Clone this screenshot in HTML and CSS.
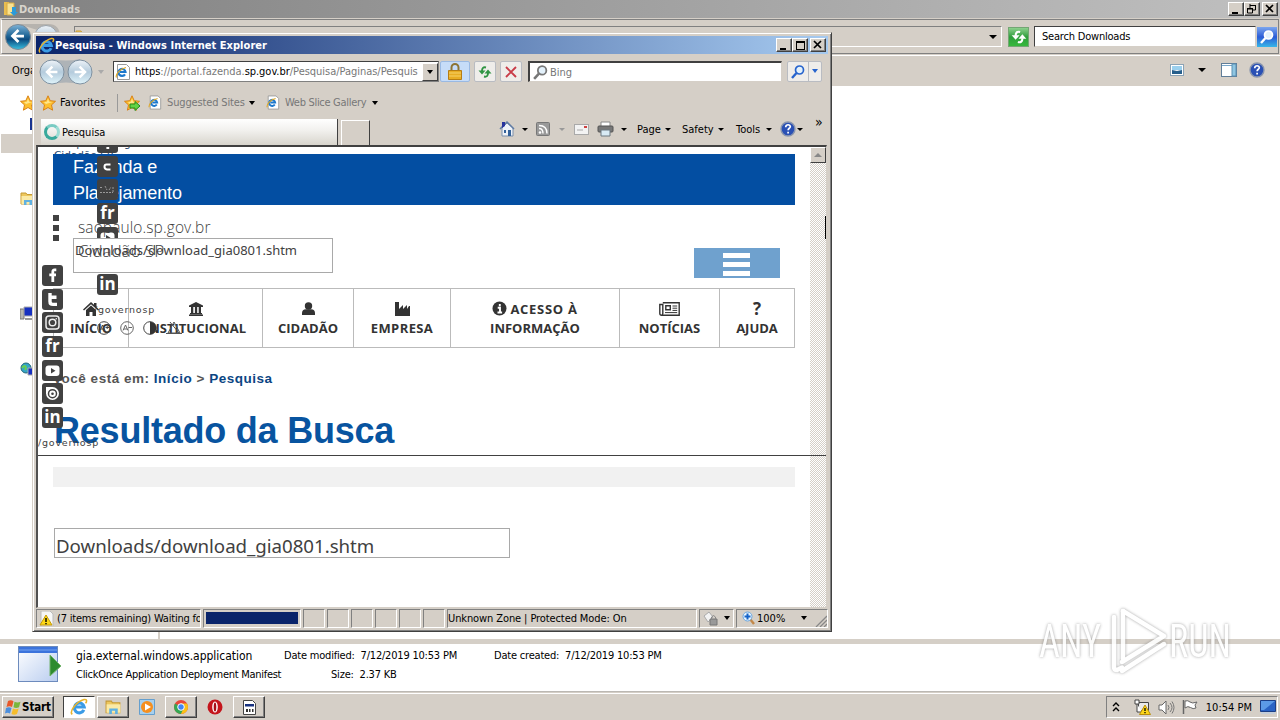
FILE: index.html
```html
<!DOCTYPE html>
<html lang="en">
<head>
    <meta charset="UTF-8">
    <meta name="viewport" content="width=device-width, initial-scale=1.0">
    <title>Pesquisa</title>
    <link rel="stylesheet" href="styles.css">
</head>
<body>
<!-- shared icons -->
<svg class="defs" width="0" height="0">
    <defs>
        <linearGradient id="gBlue" x1="0" y1="0" x2="0" y2="1"><stop offset="0" stop-color="#7fb4d8"/><stop offset=".45" stop-color="#1f6596"/><stop offset=".6" stop-color="#0d4c80"/><stop offset="1" stop-color="#39c0e0"/></linearGradient>
        <linearGradient id="gPale" x1="0" y1="0" x2="0" y2="1"><stop offset="0" stop-color="#eef3f8"/><stop offset=".5" stop-color="#b4cbdc"/><stop offset="1" stop-color="#e0f4fa"/></linearGradient>
        <linearGradient id="gWin" x1="0" y1="0" x2="1" y2="1"><stop offset="0" stop-color="#ffffff"/><stop offset="1" stop-color="#b9cdf0"/></linearGradient>
        <symbol id="ie" viewBox="0 0 16 16">
            <path d="M12.300 10.600A4.400 4.400 0 1 1 12.600 8H5" fill="none" stroke="#3a9be6" stroke-width="2.800"/>
            <path d="M2 14.600C-1 12 6 3 12.500 1.400c3-.6 2.400 1.900 1.300 3.300" fill="none" stroke="#e7b32c" stroke-width="1.400"/>
        </symbol>
        <symbol id="iepage" viewBox="0 0 16 16">
            <path d="M2.500.500h9l3 3v12h-12z" fill="#fff" stroke="#9a9a9a"/>
            <path d="M10 10.300A3.500 3.500 0 1 1 10.500 8H5" fill="none" stroke="#1d78cc" stroke-width="2.200"/>
            <path d="M1.500 13.500C0 11 5 4.500 11 3.500" fill="none" stroke="#e0a928" stroke-width="1.200"/>
        </symbol>
        <symbol id="star" viewBox="0 0 16 16"><path d="M8 .8l2.200 4.900 5.300.6-4 3.600 1.100 5.300L8 12.500l-4.600 2.700 1.100-5.300-4-3.600 5.300-.6z" fill="#fdc02f" stroke="#d98218"/><path d="M8 3.500l1.200 3.200 3.300.3-6.500 2-2-2 2.800-.3z" fill="#ffe58a"/></symbol>
        <symbol id="folder" viewBox="0 0 16 16"><path d="M1 2h5l1 1.500h7V13H1z" fill="#edc75d" stroke="#c69a35"/><path d="M1.500 5h13v8h-13z" fill="#fbeaa6"/><path d="M4 14V9h8v5h-2.500v-3h-3v3z" fill="#5fb1e2"/></symbol>
        <symbol id="left" viewBox="0 0 24 24"><path d="M12.500 5.500L6 12l6.500 6.500M6.500 12H18.500" fill="none" stroke="#fff" stroke-width="3"/></symbol>
        <symbol id="lens" viewBox="0 0 16 16"><circle cx="9.500" cy="6" r="4" fill="#e3f1fb" stroke="currentColor" stroke-width="1.700"/><path d="M6.500 9L2 14" stroke="currentColor" stroke-width="2.400"/></symbol>
        <symbol id="refresh" viewBox="0 0 16 16"><path d="M9 3.500Q5 2.500 5 7M7 12.500q4 1 4-3.500" stroke="currentColor" stroke-width="1.900" fill="none"/><path d="M1.500 6.500h7L5 10.500zM7.500 9.500h7L11 5.500z" fill="currentColor"/></symbol>
        <symbol id="help" viewBox="0 0 16 16"><circle cx="8" cy="8" r="7" fill="#2a50b4" stroke="#8a96ae" stroke-width="1.400"/><path d="M5.700 6.200c0-3.400 4.800-3 4.600-.4-.1 1.500-2.200 1.500-2.200 3.400M8.100 10.700v1.900" fill="none" stroke="#fff" stroke-width="1.700"/></symbol>
        <symbol id="fb" viewBox="0 0 21 21"><rect width="21" height="21" rx="3" fill="#414141"/><path d="M14.300 4.800h-1.800c-1.500 0-1.700.8-1.700 2.200v10M7.300 9.800h6.700" fill="none" stroke="#fff" stroke-width="2.800"/></symbol>
        <symbol id="tw" viewBox="0 0 21 21"><rect width="21" height="21" rx="3" fill="#414141"/><path d="M8 4v8.500c0 2 1 2.900 3 2.900h4M8 8.300h6.500" fill="none" stroke="#fff" stroke-width="3.400"/></symbol>
        <symbol id="tw2" viewBox="0 0 21 21"><rect width="21" height="21" rx="3" fill="#414141"/><path d="M13.500 8.500H9.500q-2 0-2 2.300t2.500 2.700h3.500" fill="none" stroke="#fff" stroke-width="2"/></symbol>
        <symbol id="ig" viewBox="0 0 21 21"><rect width="21" height="21" rx="3" fill="#414141"/><rect x="4" y="4" width="13" height="13" rx="3" fill="none" stroke="#eee" stroke-width="1.500"/><circle cx="10.500" cy="10.500" r="3.300" fill="none" stroke="#eee" stroke-width="1.500"/><circle cx="14.300" cy="6.800" r=".8" fill="#eee"/></symbol>
        <symbol id="ig2" viewBox="0 0 21 21"><rect width="21" height="21" rx="3" fill="#414141"/><path d="M3 8.500h3M8 7l2 4M12 11l2-3M16 8v5M3 13.500h13" fill="none" stroke="#999" stroke-width="1" stroke-dasharray="2 1"/></symbol>
        <symbol id="yt" viewBox="0 0 21 21"><rect width="21" height="21" rx="3" fill="#414141"/><rect x="3.500" y="5.500" width="14" height="10.500" rx="3" fill="#fff"/><path d="M9 8l4.500 2.700L9 13.500z" fill="#414141"/></symbol>
        <symbol id="is" viewBox="0 0 21 21"><rect width="21" height="21" rx="3" fill="#414141"/><path d="M4 4h6.500a6.500 6.500 0 1 1-6.500 6.500z" fill="#fff"/><circle cx="10.500" cy="10.700" r="4" fill="#fff" stroke="#414141" stroke-width="1.500"/><circle cx="10.500" cy="10.700" r="1.300" fill="#414141"/></symbol>
    </defs>
</svg>

<div class="desktop">
    <!-- explorer window -->
    <div class="explorer">
        <div class="ex-title">
            <svg width="16" height="16" viewBox="0 0 16 16"><path d="M2 1h5v13H2z" fill="#e9bd50"/><path d="M5 2h7v12H5z" fill="#fae391" stroke="#d6ab45"/><path d="M10 6h4v5h2l-4 4-4-4h2z" fill="#2c9ad8"/></svg>
            <span class="ex-name">Downloads</span>
            <div class="caption-btns">
                <span class="cbtn"><i class="min"></i></span><span class="cbtn"><svg width="10" height="10" viewBox="0 0 10 10"><path d="M3 1.500h6M3 0v4M8.500 1v5H6M.5 5h5v4h-5zM0 4.500h6" fill="none" stroke="#000"/></svg></span><span class="cbtn last"><svg width="10" height="10" viewBox="0 0 10 10"><path d="M1 1l7 7M8 1L1 8" stroke="#000" stroke-width="1.700"/></svg></span>
            </div>
        </div>
        <div class="ex-nav">
            <svg class="orbs" width="58" height="28" viewBox="0 0 58 28"><path d="M14 1h30q12 0 12 13" fill="#b6b3ae"/><circle cx="14" cy="14" r="12.500" fill="url(#gBlue)" stroke="#7d8994"/><circle cx="42" cy="14" r="11.500" fill="url(#gPale)" stroke="#9aa3ab"/><use href="#left" x="3" y="2" width="22" height="22"/></svg>
            <div class="ex-address">
                <svg width="16" height="16"><use href="#folder"/></svg>
                <i class="arrow"></i>
            </div>
            <span class="ex-refresh"><svg width="18" height="18"><use href="#refresh"/></svg></span>
            <div class="ex-search">Search Downloads</div>
            <span class="ex-go"><svg width="16" height="16"><use href="#lens"/></svg></span>
        </div>
        <div class="ex-tools">
            <span class="org">Orga</span>
            <svg width="14" height="12" viewBox="0 0 14 12"><rect x=".5" y=".5" width="13" height="11" fill="#fff" stroke="#8ca3b5"/><path d="M2 2h10v4H2z" fill="#9bd0ee"/><path d="M2 6l5 1 5-1v4H2z" fill="#265f8c"/></svg>
            <i class="arrow"></i>
            <svg class="pane" width="16" height="14" viewBox="0 0 16 14"><rect x=".5" y=".5" width="15" height="13" fill="#fff" stroke="#607d98"/><path d="M1 2.500h14" stroke="#79a7ca"/><path d="M11 1h4v12h-4z" fill="#8fc6e2" stroke="#5a90b2"/></svg>
            <svg width="16" height="16"><use href="#help"/></svg>
        </div>
        <div class="ex-body">
            <div class="tree">
                <svg class="t-fav" width="16" height="16"><use href="#star"/></svg>
                <i class="t-desk"></i>
                <div class="t-sel"></div>
                <svg class="t-lib" width="16" height="16"><use href="#folder"/></svg>
                <svg class="t-pc" width="16" height="16" viewBox="0 0 16 16"><path d="M0 4h4v10H0z" fill="#b7b7b0" stroke="#777"/><path d="M4 2h12v9H4z" fill="#1630c0" stroke="#aaa"/><path d="M5 13h8v2H5z" fill="#999"/></svg>
                <svg class="t-net" width="16" height="16" viewBox="0 0 16 16"><circle cx="6" cy="6" r="5" fill="#35a5c8" stroke="#267"/><path d="M2 6c3-4 5-1 3 2" stroke="#68cf55" stroke-width="2" fill="none"/><path d="M8 6h8v7H8z" fill="#1630c0" stroke="#aaa"/></svg>
            </div>
        </div>
        <div class="ex-details">
            <svg class="app-icon" width="44" height="38" viewBox="0 0 44 38"><rect x=".5" y=".5" width="39" height="35" fill="url(#gWin)" stroke="#6d8bbd"/><path d="M1 1h38v6H1z" fill="#3b73dc"/><path d="M1 4h38" stroke="#74a3f0"/><path d="M32 9l11 11-11 10z" fill="#2d8b2f" stroke="#73b36c"/></svg>
            <div class="d-main">
                <div class="d-name">gia.external.windows.application</div>
                <div class="d-type">ClickOnce Application Deployment Manifest</div>
            </div>
            <div class="d-col">
                <div class="d-row">Date modified: &nbsp;7/12/2019 10:53 PM</div>
                <div class="d-row size">Size: &nbsp;2.37 KB</div>
            </div>
            <div class="d-col created">
                <div class="d-row">Date created: &nbsp;7/12/2019 10:53 PM</div>
            </div>
        </div>
    </div>

    <!-- internet explorer window -->
    <div class="ie">
        <div class="ie-title">
            <svg width="17" height="17"><use href="#ie"/></svg>
            <span class="ie-name">Pesquisa - Windows Internet Explorer</span>
            <div class="caption-btns">
                <span class="cbtn"><i class="min"></i></span><span class="cbtn"><i class="max"></i></span><span class="cbtn last"><svg width="10" height="10" viewBox="0 0 10 10"><path d="M1 1l7 7M8 1L1 8" stroke="#000" stroke-width="1.700"/></svg></span>
            </div>
        </div>
        <div class="ie-nav">
            <svg class="ie-orbs" width="56" height="28" viewBox="0 0 56 28"><path d="M14 1q14 3 28 0v25q-14-3-28 0z" fill="#aeb3b7"/><circle cx="14" cy="14" r="12" fill="url(#gPale)" stroke="#7f91a1"/><circle cx="42" cy="14" r="12" fill="url(#gPale)" stroke="#7f91a1"/><use href="#left" x="4" y="4" width="20" height="20"/><use href="#left" x="-52" y="4" width="20" height="20" transform="scale(-1 1)"/></svg>
            <i class="arrow pale"></i>
            <div class="ie-address">
                <svg width="16" height="16"><use href="#iepage"/></svg>
                <span class="url"><b>https</b>://portal.fazenda.<b>sp.gov.br</b>/Pesquisa/Paginas/Pesquis</span>
                <span class="drop"><i class="arrow"></i></span>
            </div>
            <span class="tbtn lock"><svg width="14" height="17" viewBox="0 0 14 17"><path d="M3.500 8V4.500a3.500 3.500 0 0 1 7 0V8" fill="none" stroke="#8d7434" stroke-width="2"/><path d="M.5 7.500h13v9H.5z" fill="#e8ad24" stroke="#b67d14"/><path d="M1 10h12M1 13h12" stroke="#f6d268"/></svg></span>
            <span class="tbtn green"><svg width="16" height="16"><use href="#refresh"/></svg></span>
            <span class="tbtn stop"><svg width="12" height="12" viewBox="0 0 12 12"><path d="M1 1l10 10M11 1L1 11" stroke="#c93c48" stroke-width="1.900"/></svg></span>
            <div class="ie-search"><svg width="17" height="17"><use href="#lens"/></svg><span>Bing</span></div>
            <span class="tbtn go"><svg width="16" height="16"><use href="#lens"/></svg><span><i class="arrow"></i></span></span>
        </div>
        <div class="ie-favs">
            <svg width="16" height="16"><use href="#star"/></svg>
            <span class="fav-label">Favorites</span>
            <svg class="addfav" width="16" height="16" viewBox="0 0 16 16"><use href="#star"/><path d="M6 9h5V6.500l5 4.500-5 4.500V13H6z" fill="#63d344" stroke="#248c1d"/></svg>
            <svg class="page1" width="14" height="15"><use href="#iepage"/></svg>
            <span class="sugg">Suggested Sites</span><i class="arrow"></i>
            <svg class="page2" width="14" height="15"><use href="#iepage"/></svg>
            <span class="slice">Web Slice Gallery</span><i class="arrow"></i>
        </div>
        <div class="ie-tabs">
            <div class="tab"><i class="spinner"></i><span>Pesquisa</span></div>
            <div class="newtab"></div>
            <div class="commands">
                <svg width="16" height="16" viewBox="0 0 16 16"><path d="M3 7v8h11V7L8 2z" fill="#eef2f8" stroke="#7d90ab"/><path d="M1 8l7-7 7 7" fill="none" stroke="#5f7ba4" stroke-width="1.500"/><path d="M3 1h3v4L3 7z" fill="#27339d"/><path d="M9 9h3v6H9z" fill="#34629a"/><path d="M5 9h2v3H5z" fill="#34629a"/></svg><i class="arrow"></i>
                <svg class="rss" width="14" height="14" viewBox="0 0 14 14"><rect x=".5" y=".5" width="13" height="13" rx="1" fill="#999" stroke="#777"/><circle cx="4" cy="10.500" r="1.300" fill="#fff"/><path d="M3 6.500q4 0 4 5M3 3.500q8 0 8 8" fill="none" stroke="#fff" stroke-width="1.400"/></svg><i class="arrow dim"></i>
                <svg class="mail" width="15" height="11" viewBox="0 0 15 11"><rect x=".5" y=".5" width="14" height="10" fill="#f3f3f3" stroke="#a9a9a9"/><path d="M10 2h3v2h-3z" fill="#cd4141"/><path d="M3 6h6" stroke="#aaa"/></svg>
                <svg class="print" width="17" height="16" viewBox="0 0 17 16"><path d="M4 1h9v5H4z" fill="#fff" stroke="#888"/><rect x="1" y="5" width="15" height="6" rx="1" fill="#777" stroke="#555"/><path d="M4 9h9v6H4z" fill="#d8eaf4" stroke="#6c7880"/></svg><i class="arrow"></i>
                <span class="cmd page">Page</span><i class="arrow"></i>
                <span class="cmd safety">Safety</span><i class="arrow"></i>
                <span class="cmd toolsm">Tools</span><i class="arrow"></i>
                <svg class="q" width="16" height="16"><use href="#help"/></svg><i class="arrow near"></i>
                <span class="more">»</span>
            </div>
        </div>

        <div class="viewport">
            <div class="site">
                <span class="ghost line1">saopaulo.sp.gov.br</span>
                <span class="ghost">Cidadão SP</span>
                <div class="banner"><div>Fazenda e</div><div>Planejamento</div></div>
                <div class="masthead">
                    <div class="dots"><i></i><i></i><i></i></div>
                    <div class="left-col">
                        <div class="gov">saopaulo.sp.gov.br</div>
                        <div class="top-search">Downloads/download_gia0801.shtm</div>
                    </div>
                    <div class="burger"><i></i><i></i><i></i></div>
                </div>
                <nav class="menu">
                    <a class="m-inicio"><svg width="16" height="14" viewBox="0 0 16 14"><path d="M0 7.500L8 0l3 2.800V1h2.500v4L16 7.500l-1 1L8 2.300 1 8.500z" fill="#333"/><path d="M3 8l5-4.500L13 8v6H9.500v-4h-3v4H3z" fill="#333"/></svg>INÍCIO</a>
                    <a class="m-inst"><svg width="14" height="14" viewBox="0 0 14 14"><path d="M0 3.500L7 0l7 3.500V5H0zM2 5h2.300v6H2zm3.900 0h2.300v6H5.900zm3.800 0H12v6H9.700zM1 11h12v1.200H1zM0 12.500h14V14H0z" fill="#333"/></svg>INSTITUCIONAL</a>
                    <a class="m-cid"><svg width="13" height="14" viewBox="0 0 13 14"><circle cx="6.500" cy="4" r="3.700" fill="#333"/><path d="M0 13v-2q0-3.500 4-3.800h5q4 .3 4 3.800v2z" fill="#333"/></svg>CIDADÃO</a>
                    <a class="m-emp"><svg width="15" height="14" viewBox="0 0 15 14"><path d="M0 14V0h4v7l4-4v4l4-4v4l2-3 1 0v10z" fill="#333"/></svg>EMPRESA</a>
                    <a class="m-info"><span class="line"><svg width="15" height="15" viewBox="0 0 15 15"><circle cx="7.500" cy="7.500" r="7" fill="#333"/><path d="M7.800 3v2.200M5.700 6.700H8v4.600M5.500 11.500h4.600" fill="none" stroke="#fff" stroke-width="1.900"/></svg> ACESSO À</span>INFORMAÇÃO</a>
                    <a class="m-not"><svg width="21" height="14" viewBox="0 0 21 14"><path d="M3.800.8h16.400v12.400H2.500Q.8 13.200.8 11.500V2.500h3v9q0 1.500-1.300 1.700" fill="none" stroke="#333" stroke-width="1.400"/><path d="M6.800 3.800h4.500v4H6.800z" fill="none" stroke="#333" stroke-width="1.400"/><path d="M13.500 4h4.700M13.500 6.200h4.700M13.500 8.400h4.700M6 10.600h12.200" stroke="#333"/></svg>NOTÍCIAS</a>
                    <a class="m-aj"><span class="qm">?</span>AJUDA</a>
                </nav>
                <div class="breadcrumb">Você está em: <a>Início</a> &gt; <a>Pesquisa</a></div>
                <h1>Resultado da Busca</h1>
                <div class="graybar"></div>
                <div class="query">Downloads/download_gia0801.shtm</div>

                <!-- floating widgets that land over the page -->
                <div class="social header-social">
                    <svg><use href="#fb"/></svg><svg><use href="#tw2"/></svg><svg><use href="#ig2"/></svg><span class="sq">fr</span><svg><use href="#yt"/></svg>
                </div>
                <span class="sq header-in">in</span>
                <span class="cidadao">Cidadão SP</span>
                <span class="gsp header-gsp">/governosp</span>
                <div class="access">
                    <svg width="14" height="14" viewBox="0 0 14 14"><circle cx="7" cy="7" r="6.300" fill="none" stroke="#444"/><path d="M3 9.500L5.500 4 8 9.500M4 8h3M8.500 6.500H12M10.200 5v3" stroke="#444" fill="none"/></svg>
                    <svg width="14" height="14" viewBox="0 0 14 14"><circle cx="7" cy="7" r="6.300" fill="none" stroke="#666"/><path d="M3 9.500L5.500 4 8 9.500M4 8h3M8.500 6.500H12" stroke="#666" fill="none"/></svg>
                    <svg width="14" height="14" viewBox="0 0 14 14"><circle cx="7" cy="7" r="6.300" fill="#fff" stroke="#444"/><path d="M7 .7a6.300 6.300 0 0 1 0 12.600z" fill="#333"/></svg>
                    <svg width="16" height="14" viewBox="0 0 16 14"><path d="M2 12L8 1l6 11zM0 12.500h16M4 1l9 11" fill="none" stroke="#555"/></svg>
                </div>
                <div class="social side-social">
                    <svg><use href="#fb"/></svg><svg><use href="#tw"/></svg><svg><use href="#ig"/></svg><span class="sq">fr</span><svg><use href="#yt"/></svg><svg><use href="#is"/></svg><span class="sq">in</span>
                </div>
                <span class="gsp side-gsp">/governosp</span>
            </div>
            <div class="scroll"><span class="up"></span></div>
            <div class="rule"></div>
            <div class="mark"></div>
        </div>

        <div class="status">
            <div class="cell msg"><svg width="15" height="15" viewBox="0 0 15 15"><path d="M2 0h9l3 3v12H2z" fill="#f7f7f7" stroke="#bbb"/><path d="M7 4l6 10H1z" fill="#fcd716" stroke="#c79a0b"/><path d="M7 7v4M7 12v1.200" stroke="#000" stroke-width="1.400"/></svg><span>(7 items remaining) Waiting fo</span></div>
            <div class="cell prog"><i></i></div>
            <div class="cell s"></div><div class="cell s"></div><div class="cell s"></div><div class="cell s"></div><div class="cell s"></div><div class="cell s"></div>
            <div class="cell zone">Unknown Zone | Protected Mode: On</div>
            <div class="cell priv"><svg width="16" height="15" viewBox="0 0 16 15"><path d="M1 5l5-4 4 5-5 5z" fill="#f2f2f2" stroke="#aaa"/><path d="M7 8h7v6H7z" fill="#999" stroke="#777"/><path d="M8.500 8V6q2-3 4 0v2" fill="none" stroke="#888"/></svg><i class="arrow"></i></div>
            <div class="cell zoom"><svg width="14" height="14" viewBox="0 0 14 14"><path d="M8 8l4 5" stroke="#c38848" stroke-width="2.400"/><circle cx="5.500" cy="5.500" r="4.500" fill="#e7f5ff" stroke="#6aa6df"/><path d="M5.500 2.500v6M2.500 5.500h6" stroke="#1563c8" stroke-width="2"/></svg><span>100%</span><i class="arrow"></i><svg class="grip" width="12" height="12" viewBox="0 0 12 12"><path d="M1 12L12 1M5 12l7-7M9 12l3-3" stroke="#888" stroke-width="1.300"/></svg></div>
        </div>
    </div>

    <svg class="watermark" width="200" height="76" viewBox="0 0 200 76">
        <g fill="none" stroke="#fff" stroke-width="4.500" stroke-linejoin="round" stroke-linecap="round"><path d="M78 15v50q0 3 3 3l5-2.500"/><path d="M87 9v48"/><path d="M87 9l41 25-42 26"/><path d="M86 69l42-27"/></g>
        <g class="wm"><text x="3" y="55" textLength="62" lengthAdjust="spacingAndGlyphs">ANY</text><text x="133" y="55" textLength="62" lengthAdjust="spacingAndGlyphs">RUN</text></g>
    </svg>

    <!-- taskbar -->
    <div class="taskbar">
        <div class="start"><svg width="17" height="16" viewBox="0 0 17 16"><path d="M3 2q3-1.500 5.500.3L7 8Q4.500 6.500 1.500 8z" fill="#e8582a"/><path d="M9.500 2.700q3 1.500 6 0L14 8.300q-3 1.500-5.500 0z" fill="#7ab63c"/><path d="M1 9q3-1.500 5.500 0L5 14.500q-2.500-1.500-5 0z" fill="#4c8fdd"/><path d="M8 9.500q3 1.500 5.700 0L12 15q-3 1.500-5.500 0z" fill="#f6bd2b"/></svg>Start</div>
        <div class="task on"><svg width="18" height="18"><use href="#ie"/></svg></div>
        <div class="task raised"><svg width="17" height="17"><use href="#folder"/></svg></div>
        <div class="task flat wmp"><svg width="16" height="16" viewBox="0 0 16 16"><path d="M.5.5h15v15H.5z" fill="#a7d0ee" stroke="#659fce"/><circle cx="8" cy="8" r="6" fill="#f58f1f"/><path d="M6 4.500l6 3.500-6 3.500z" fill="#fff"/></svg></div>
        <div class="task raised chrome"><svg width="16" height="16" viewBox="0 0 16 16"><circle cx="8" cy="8" r="7" fill="#e8473a"/><path d="M8 8L2 4.500A7 7 0 0 0 8 15l3-5z" fill="#35a853"/><path d="M8 8h3l-3 7a7 7 0 0 0 6-10.500H8z" fill="#fbc116"/><circle cx="8" cy="8" r="3.300" fill="#4285f4" stroke="#fff"/></svg></div>
        <div class="task flat opera"><svg width="16" height="16" viewBox="0 0 16 16"><circle cx="8" cy="8" r="7.500" fill="#c4151c"/><ellipse cx="8" cy="8" rx="2.800" ry="5.600" fill="#fff"/><ellipse cx="8" cy="8" rx="1.300" ry="4.500" fill="#a80e16"/></svg></div>
        <div class="task raised cal"><svg width="13" height="15" viewBox="0 0 13 15"><path d="M.5.5h9l3 3v11H.5z" fill="#fff" stroke="#444"/><path d="M2 4h9v2.500H2z" fill="#17317f"/><path d="M3 9h2v3H3zM6 9h1.500v3H6zM9 9h1.500v3H9z" fill="#333"/></svg></div>
        <div class="tray">
            <svg width="8" height="12" viewBox="0 0 8 12"><path d="M1 5l3-3 3 3M1 10l3-3 3 3" fill="none" stroke="#000" stroke-width="1.400"/></svg>
            <svg class="net" width="17" height="16" viewBox="0 0 17 16"><path d="M4.500 3.500h10v8h-10z" fill="#e9e9e9" stroke="#444"/><path d="M1 1h4v4H1zM3 5v8h5" fill="#fff" stroke="#444"/><path d="M11 6l5.500 9.500h-11z" fill="#fdd719" stroke="#b98e0a"/><path d="M11 9v3M11 13v1.200" stroke="#000" stroke-width="1.300"/></svg>
            <svg class="vol" width="17" height="15" viewBox="0 0 17 15"><path d="M1 5h3l4-4v13l-4-4H1z" fill="#fff" stroke="#666"/><path d="M10 5q2 2.500 0 5M12 3q4 4.500 0 9M14 1.500q4 6 0 12" fill="none" stroke="#777"/></svg>
            <svg class="flag" width="17" height="16" viewBox="0 0 17 16"><path d="M1.500 1v14" stroke="#666" stroke-width="1.500"/><path d="M3 2q3-1 5 1t7 0l-2 3 1 3q-3 1.500-5.500-.5T3 9z" fill="#fff" stroke="#666"/></svg>
            <span class="clock">10:54 PM</span>
            <svg class="show" width="16" height="14" viewBox="0 0 16 14"><path d="M.5.5h15v11H.5z" fill="#2a63c4" stroke="#1b3e86"/><path d="M1 1h14L4 10H1z" fill="#5c9ae6"/><path d="M1 13h14" stroke="#b5cdec"/></svg>
        </div>
    </div>
</div>
</body>
</html>
```

FILE: styles.css
```css
* {
    box-sizing: border-box;
}
body {
    margin: 0;
    font-family: "DejaVu Sans Condensed", "DejaVu Sans", sans-serif;
    font-stretch: condensed;
    font-size: 11px;
    color: #000;
    overflow: hidden;
}
svg {
    flex: none;
    display: block;
}
.defs {
    position: absolute;
}
.desktop {
    position: relative;
    width: 1280px;
    height: 720px;
    background-color: #d5cfc7;
    overflow: hidden;
    white-space: nowrap;
}
.arrow {
    flex: none;
    width: 0;
    height: 0;
    border: 3.5px solid transparent;
    border-top: 4px solid #000;
    border-bottom: 0;
}
.arrow.pale {
    border-top-color: #aaa;
    margin: 0 8px 0 4px;
}
.arrow.dim {
    border-top-color: #999;
}

/* explorer */
.explorer {
    display: flex;
    flex-direction: column;
    height: 693px;
}
.ex-title {
    height: 18px;
    display: flex;
    align-items: center;
    padding: 0 2px;
    gap: 1px;
    background: linear-gradient(90deg, #818181, #c0c0c0);
}
.ex-name {
    color: #d8d4cc;
    font-weight: bold;
    letter-spacing: 0;
}
.caption-btns {
    display: flex;
    margin-left: auto;
}
.cbtn {
    width: 16px;
    height: 14px;
    display: flex;
    align-items: center;
    justify-content: center;
    background-color: #d5cfc7;
    border: 1px solid;
    border-color: #fff #404040 #404040 #fff;
    box-shadow: inset -1px -1px 0 #808080;
}
.cbtn.last {
    margin-left: 2px;
}
.min {
    width: 6px;
    height: 2px;
    background-color: #000;
    margin: 7px 2px 0 0;
}
.max {
    width: 9px;
    height: 9px;
    border: 1px solid #000;
    border-top-width: 2px;
}
.ex-nav {
    height: 35px;
    margin: 1px 1px 1px 1px;
    border: 1px solid #808080;
    border-color: #808080 #808080 #808080 #fff;
    display: flex;
    align-items: center;
    padding-left: 2px;
}
.ex-address {
    width: 928px;
    height: 21px;
    margin-left: 12px;
    border: 1px solid #808080;
    border-bottom-color: #fff;
    border-right-color: #fff;
    display: flex;
    align-items: center;
}
.ex-address .arrow {
    margin-left: auto;
    margin-right: 4px;
    border-width: 4px 4px 0;
}
.ex-refresh {
    width: 21px;
    height: 20px;
    margin-left: 6px;
    display: flex;
    align-items: center;
    justify-content: center;
    color: #fff;
    background: linear-gradient(#8dd08d, #2f9e3c 50%, #36b83c);
    border: 1px solid #74a674;
}
.ex-search {
    width: 222px;
    height: 21px;
    margin-left: 5px;
    padding-left: 7px;
    line-height: 19px;
    letter-spacing: -0.2px;
    background-color: #fff;
    border: 1px solid #d5cfc7;
    border-top: 1px solid #404040;
    border-left: 1px solid #404040;
}
.ex-go {
    width: 20px;
    height: 20px;
    margin-left: 1px;
    display: flex;
    align-items: center;
    justify-content: center;
    color: #fff;
    background: linear-gradient(#7ba6ee, #2b5cd6 50%, #37b6e8);
}
.ex-tools {
    height: 31px;
    border-top: 1px solid #fff;
    display: flex;
    align-items: center;
    padding: 0 15px 2px 12px;
}
.org {
    margin-right: auto;
}
.ex-tools .arrow {
    margin-left: 14px;
    border-width: 4px 4px 0;
}
.ex-tools .pane {
    margin: 0 12px 0 15px;
}
.ex-body {
    height: 553px;
    background-color: #fff;
}
.tree {
    width: 160px;
    height: 553px;
    border-right: 2px solid #d5cfc7;
    display: flex;
    flex-direction: column;
    padding-top: 9px;
}
.tree svg {
    margin-left: 20px;
}
.t-desk {
    width: 4px;
    height: 12px;
    margin: 7px 0 0 30px;
    background-color: #1a3490;
}
.t-sel {
    height: 19px;
    margin: 4px 0 38px 1px;
    background-color: #d5cfc7;
}
.t-pc {
    margin-top: 98px;
}
.t-net {
    margin-top: 41px;
}
.ex-details {
    height: 53px;
    border-top: 5px solid #d5cfc7;
    border-bottom: 1px solid #bbb8b3;
    background-color: #fff;
    display: flex;
    padding-left: 18px;
}
.app-icon {
    margin-top: 2px;
}
.d-main {
    margin: 3px 0 0 14px;
    width: 208px;
}
.d-name {
    font-size: 12px;
    height: 19px;
    line-height: 18px;
    letter-spacing: -0.03px;
}
.d-type, .d-row {
    height: 18px;
    line-height: 18px;
    letter-spacing: -0.2px;
}
.d-type {
    letter-spacing: -0.28px;
}
.d-col {
    margin-top: 3px;
    width: 210px;
}
.d-row.size {
    padding-left: 47px;
    line-height: 20px;
}

/* internet explorer window */
.ie {
    position: absolute;
    left: 32px;
    top: 32px;
    width: 800px;
    height: 600px;
    background-color: #d5cfc7;
    border: 1px solid;
    border-color: #d5cfc7 #404040 #404040 #d5cfc7;
    box-shadow: inset 1px 1px 0 #fff, inset -1px -1px 0 #808080;
    padding: 3px;
    display: flex;
    flex-direction: column;
}
.ie-title {
    height: 18px;
    display: flex;
    align-items: center;
    padding: 0 2px;
    background: linear-gradient(90deg, #0a246a, #a6caf0);
}
.ie-name {
    color: #fff;
    font-weight: bold;
    letter-spacing: 0.04px;
}
.ie-nav {
    height: 35px;
    display: flex;
    align-items: center;
    padding-left: 2px;
}
.ie-address {
    width: 326px;
    height: 21px;
    margin-left: 1px;
    display: flex;
    align-items: center;
    background-color: #fff;
    border: 1px solid #808080;
    border-top: 1px solid #404040;
    border-left: 1px solid #404040;
    padding-left: 1px;
}
.url {
    flex: 1;
    margin-left: 4px;
    overflow: hidden;
    color: #777;
    letter-spacing: -0.03px;
}
.url b {
    font-weight: normal;
    color: #000;
}
.drop {
    width: 16px;
    height: 18px;
    display: flex;
    align-items: center;
    justify-content: center;
    background-color: #d5cfc7;
    border: 1px solid;
    border-color: #fff #404040 #404040 #fff;
}
.tbtn {
    width: 22px;
    height: 21px;
    margin-left: 4px;
    display: flex;
    align-items: center;
    justify-content: center;
    background-color: #efedea;
    border: 1px solid #b9bcc2;
    border-radius: 2px;
}
.tbtn.lock {
    width: 30px;
    margin-left: 1px;
    background-color: #c6dcf8;
    border-color: #9ab9e2;
}
.tbtn.green {
    color: #2f9442;
}
.ie-search {
    width: 254px;
    height: 21px;
    margin-left: 6px;
    padding-left: 2px;
    display: flex;
    align-items: center;
    background-color: #fff;
    border: 1px solid #d5cfc7;
    border-top: 2px solid #404040;
    border-left: 2px solid #404040;
    color: #777;
}
.ie-search span {
    margin-left: 1px;
}
.tbtn.go {
    width: 35px;
    margin-left: 5px;
    justify-content: space-between;
    padding: 0 3px 0 2px;
    color: #2764cd;
}
.go span {
    height: 19px;
    border-left: 1px solid #b9bcc2;
    padding: 7px 0 0 3px;
}
.go .arrow {
    display: block;
    border-top-color: #2764cd;
}
.ie-favs {
    height: 27px;
    display: flex;
    align-items: center;
    padding-left: 4px;
}
.fav-label {
    width: 58px;
    margin-left: 4px;
    border-right: 1px solid #999;
    line-height: 18px;
    letter-spacing: 0.1px;
}
.addfav {
    margin-left: 6px;
}
.page1 {
    margin-left: 8px;
}
.page2 {
    margin-left: 11px;
}
.sugg, .slice {
    color: #777;
    margin-left: 5px;
    letter-spacing: -0.15px;
}
.sugg {
    width: 82px;
}
.slice {
    width: 87px;
    letter-spacing: -0.3px;
}
.ie-tabs {
    height: 29px;
    display: flex;
    padding: 3px 0 0 5px;
}
.tab {
    width: 297px;
    display: flex;
    align-items: center;
    padding-left: 3px;
    background: linear-gradient(#fff, #f1f0ed 45%, #d8d5cd);
    border-right: 1px solid #404040;
}
.tab span {
    margin-left: 2px;
}
.spinner {
    width: 16px;
    height: 16px;
    border-radius: 50%;
    border: 3px solid #38a99c;
    border-right-color: #9bdcd4;
    border-top-color: #79cbc3;
}
.newtab {
    width: 29px;
    margin: 1px 0 0 3px;
    border: 1px solid #fff;
    border-right: 1px solid #404040;
    border-bottom: 0;
}
.commands {
    flex: 1;
    display: flex;
    align-items: center;
    height: 20px;
    padding-left: 129px;
}
.commands .arrow {
    border-width: 3px 3px 0;
    margin-left: 7px;
}
.commands .rss {
    margin-left: 8px;
}
.commands .arrow.dim {
    margin-left: 9px;
}
.commands .mail {
    margin-left: 9px;
}
.commands .print {
    margin-left: 8px;
}
.commands .cmd + .arrow {
    margin-left: 0;
}
.cmd {
    margin-left: 11px;
}
.cmd.page {
    width: 28px;
    margin-left: 10px;
}
.cmd.safety {
    width: 36px;
}
.cmd.toolsm {
    width: 30px;
    margin-left: 12px;
}
.commands .q {
    margin-left: 8px;
}
.commands .arrow.near {
    margin-left: 1px;
}
.more {
    font-size: 14px;
    margin: -14px 0 0 12px;
}

/* page area */
.viewport {
    position: relative;
    height: 463px;
    margin-right: 1px;
    border: 2px solid #404040;
    border-left-color: #505050;
    border-right: 1px solid #d5cfc7;
    border-bottom: 1px solid #d5cfc7;
    border-top-width: 2px;
    display: flex;
    background-color: #fff;
    overflow: hidden;
}
.site {
    position: relative;
    width: 772px;
    overflow: hidden;
    padding: 7px 15px 0 15px;
    color: #414141;
    font-stretch: normal;
}
.banner {
    position: relative;
    height: 51px;
    padding-left: 20px;
    background-color: #034ea2;
    color: #fff;
    font-family: "Liberation Sans", Arial, sans-serif;
    font-size: 18px;
    line-height: 26px;
    letter-spacing: -0.1px;
}
.masthead {
    display: flex;
    height: 83px;
}
.dots {
    width: 20px;
    padding-top: 10px;
}
.dots i {
    display: block;
    width: 6px;
    height: 6px;
    margin-bottom: 4px;
    background-color: #414141;
}
.left-col {
    width: 260px;
    padding-top: 12px;
    position: relative;
    z-index: 2;
}
.gov, .cidadao {
    font-family: "Open Sans", "Noto Sans", sans-serif;
    font-size: 15.5px;
    font-weight: 300;
    line-height: 21px;
}
.gov {
    padding-left: 5px;
    letter-spacing: 0.1px;
}
.top-search {
    height: 35px;
    padding: 1px 1px;
    border: 1px solid #a9a9a9;
    background-color: #fff;
    font-family: "Noto Sans", sans-serif;
    font-size: 13px;
    line-height: 20px;
}
.burger {
    width: 86px;
    height: 30px;
    margin: 43px 15px 0 auto;
    padding: 5px 30px 0 29px;
    background-color: #6fa1ce;
}
.burger i {
    display: block;
    height: 5px;
    margin-bottom: 4px;
    background-color: #fff;
}
.menu {
    display: flex;
    height: 60px;
    border: 1px solid #bbb;
    font-family: "Open Sans", "Noto Sans", sans-serif;
    font-size: 13px;
    font-weight: bold;
    color: #333;
}
.menu a {
    border-right: 1px solid #bbb;
    display: flex;
    flex-direction: column;
    align-items: center;
    padding-top: 13px;
    line-height: 22px;
}
.menu a svg {
    margin-bottom: 1px;
}
.menu a:last-child {
    border-right: 0;
}
.menu .line {
    display: flex;
    gap: 3px;
    height: 15px;
    line-height: 15px;
}
.menu .line svg {
    margin: -1px 0 0;
}
.m-inicio {
    width: 75px;
}
.m-inst {
    width: 134px;
}
.m-cid {
    width: 91px;
}
.m-emp {
    width: 97px;
    letter-spacing: 0.4px;
}
.m-info {
    width: 169px;
}
.menu .line {
    letter-spacing: 0.7px;
}
.m-not {
    width: 100px;
}
.m-aj {
    flex: 1;
}
.qm {
    height: 15px;
    line-height: 14px;
    font-size: 17px;
}
.breadcrumb {
    margin-top: 20px;
    line-height: 21px;
    height: 20px;
    font-family: "Liberation Sans", Arial, sans-serif;
    font-size: 13.5px;
    font-weight: bold;
    letter-spacing: 0.52px;
    color: #555;
}
.breadcrumb a {
    color: #0b4583;
}
h1 {
    margin: 23px 0 0;
    padding-left: 1px;
    height: 56px;
    line-height: 40px;
    font-family: "Liberation Sans", Arial, sans-serif;
    font-size: 36px;
    letter-spacing: -0.22px;
    color: #0854a0;
}
.graybar {
    height: 20px;
    background-color: #f1f1f1;
}
.query {
    width: 456px;
    height: 30px;
    margin: 41px 0 0 1px;
    padding-left: 1px;
    border: 1px solid #a9a9a9;
    font-family: "Noto Sans", sans-serif;
    font-size: 18.7px;
    letter-spacing: -0.03px;
    line-height: 34px;
    overflow: hidden;
}
.ghost {
    position: absolute;
    left: 16px;
    top: 2px;
    font-family: "DejaVu Sans", sans-serif;
    font-size: 10.5px;
    color: #24466d;
}
.ghost.line1 {
    top: -10px;
    left: 20px;
}

/* floating widgets */
.social {
    position: absolute;
    display: flex;
    flex-direction: column;
    gap: 2.7px;
}
.social svg, .sq {
    width: 21px;
    height: 21px;
}
.sq {
    background-color: #414141;
    border-radius: 3px;
    color: #fff;
    font-family: "Open Sans", sans-serif;
    font-weight: bold;
    font-size: 17px;
    line-height: 19px;
    text-align: center;
}
.header-social {
    left: 59px;
    top: -15px;
}
.side-social {
    left: 4px;
    top: 118px;
}
.header-in {
    position: absolute;
    left: 59px;
    top: 127px;
}
.cidadao {
    position: absolute;
    z-index: 3;
    left: 40px;
    top: 93px;
    font-size: 17px;
}
.gsp {
    position: absolute;
    font-family: "DejaVu Sans", sans-serif;
    font-size: 9.5px;
    letter-spacing: 0.8px;
}
.header-gsp {
    left: 56px;
    top: 157px;
}
.side-gsp {
    left: 0;
    top: 290px;
}
.access {
    position: absolute;
    left: 59px;
    top: 174px;
    display: flex;
    gap: 9px;
}
.scroll {
    flex: 1;
    background: repeating-conic-gradient(#fff 0 25%, #d5cfc7 0 50%) 0 0 / 2px 2px;
}
.up {
    width: 16px;
    height: 16px;
    display: flex;
    align-items: center;
    justify-content: center;
    background-color: #d5cfc7;
    border: 1px solid;
    border-color: #fff #404040 #404040 #fff;
}
.up::after {
    content: "";
    border: 4px solid transparent;
    border-top: 0;
    border-bottom: 4px solid #888;
}
.rule {
    position: absolute;
    left: 0;
    right: 0;
    top: 308px;
    height: 1px;
    background-color: #414141;
}
.mark {
    position: absolute;
    right: 0;
    top: 69px;
    width: 1px;
    height: 23px;
    background-color: #000;
}

/* status bar */
.status {
    flex: 1;
    display: flex;
    align-items: center;
    gap: 2px;
}
.cell {
    height: 19px;
    display: flex;
    align-items: center;
    border: 1px solid;
    border-color: #808080 #fff #fff #808080;
}
.msg {
    width: 165px;
    padding-left: 2px;
    overflow: hidden;
}
.msg span {
    margin-left: 3px;
    letter-spacing: -0.2px;
}
.prog {
    width: 98px;
    padding: 2px;
}
.prog i {
    width: 92px;
    height: 12px;
    background-color: #0a246a;
}
.cell.s {
    width: 22px;
}
.cell.zone {
    width: 250px;
    letter-spacing: -0.1px;
}
.cell.priv {
    width: 35px;
    padding-left: 3px;
    gap: 5px;
}
.cell.zoom {
    flex: 1;
    padding-left: 5px;
}
.zoom span {
    width: 44px;
    margin-left: 1px;
}
.grip {
    margin: 5px 0 0 auto;
}

/* watermark */
.watermark {
    position: absolute;
    left: 1036px;
    top: 602px;
    filter: drop-shadow(0 0 1.5px rgba(120, 120, 120, 0.75));
    opacity: 0.9;
}
.wm {
    font-family: Roboto, sans-serif;
    font-size: 46px;
    fill: #fff;
}

/* taskbar */
.taskbar {
    height: 27px;
    border-top: 1px solid #fff;
    display: flex;
    align-items: center;
    padding: 0 2px;
}
.start, .task {
    height: 22px;
    display: flex;
    align-items: center;
    justify-content: center;
}
.start, .raised {
    border: 1px solid;
    border-color: #fff #404040 #404040 #fff;
    box-shadow: inset -1px -1px 0 #808080;
}
.start {
    width: 52px;
    font-weight: bold;
    font-size: 11.5px;
    letter-spacing: -0.1px;
    margin-right: 9px;
}
.task {
    width: 32px;
    margin-right: 2px;
}
.task.on {
    border: 1px solid;
    border-color: #404040 #fff #fff #404040;
    background-color: #fff;
}
.tray {
    margin-left: auto;
    width: 172px;
    height: 22px;
    border: 1px solid;
    border-color: #808080 #fff #fff #808080;
    display: flex;
    align-items: center;
    padding: 0 1px 0 5px;
}
.net {
    margin-left: 14px;
}
.vol {
    margin-left: 7px;
}
.flag {
    margin-left: 7px;
}
.clock {
    margin-left: auto;
}
.show {
    margin-left: 8px;
}
```
